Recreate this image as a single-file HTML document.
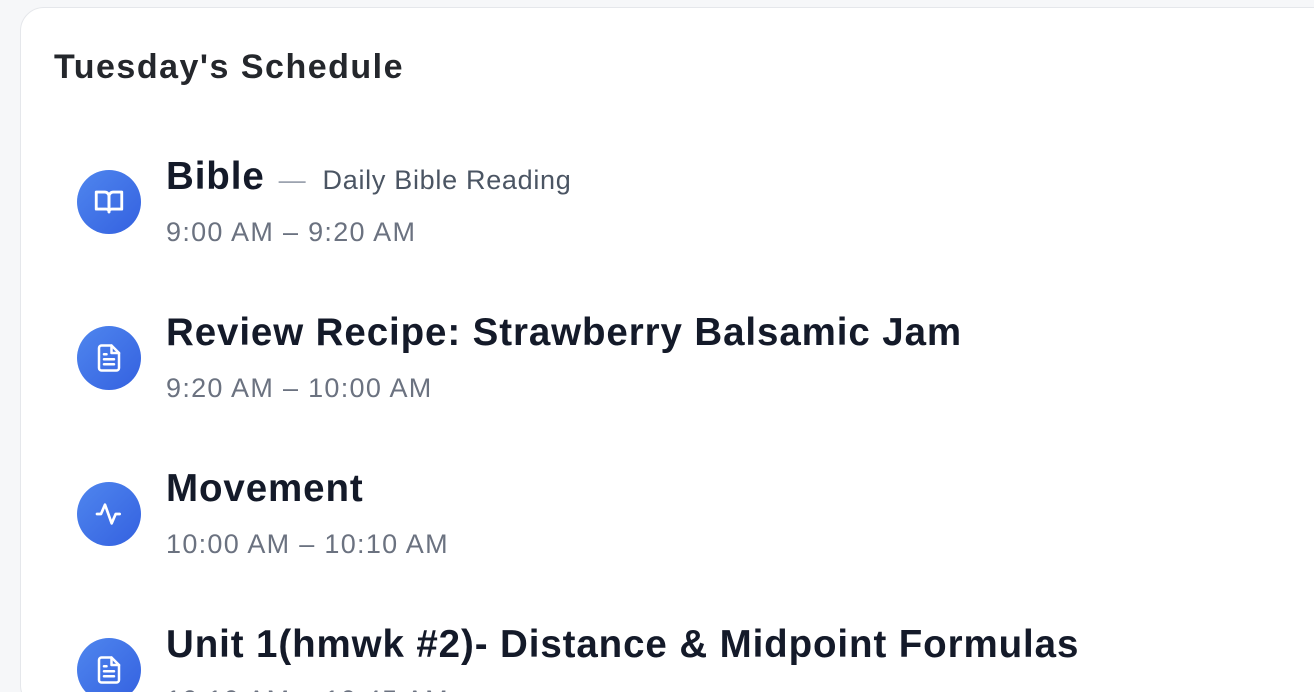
<!DOCTYPE html>
<html><head><style>
html,body{margin:0;width:1314px;height:692px;overflow:hidden}
body{background:#f6f7f9;font-family:"Liberation Sans",sans-serif;position:relative}
.card{position:absolute;left:20px;top:7px;width:1330px;height:700px;background:#fff;border:1.5px solid #e5e7eb;border-radius:24px;}
h1{position:absolute;left:54px;top:48px;margin:0;font-size:34px;font-weight:700;color:#24272c;letter-spacing:1.5px}
.item{position:absolute;left:77px;}
.ic{position:absolute;left:0;width:64px;height:64px;border-radius:50%;background:linear-gradient(135deg,#4f86ee,#3461e0);display:flex;align-items:center;justify-content:center}
.t{position:absolute;left:89px;white-space:nowrap;font-size:38.5px;font-weight:700;color:#141a29;letter-spacing:0.9px}
.t span{font-size:27px;font-weight:400;color:#4b5563;margin-left:16px;letter-spacing:0.7px}
.t i{font-style:normal;color:#9ca3af;font-weight:400;font-size:27px;margin-left:14px}
.s{position:absolute;left:89px;font-size:27px;color:#6b7280;white-space:nowrap;letter-spacing:1.3px}
</style></head><body>
<div class="card"></div>
<h1>Tuesday's Schedule</h1>

<div class="item" style="top:170px">
<div class="ic"><svg width="34" height="34" viewBox="0 0 24 24" fill="none" stroke="#fff" stroke-width="2" stroke-linejoin="round"><path d="M3 5h6a3 3 0 0 1 3 3v11a2 2 0 0 0-2-2H3z"/><path d="M21 5h-6a3 3 0 0 0-3 3v11a2 2 0 0 1 2-2h7z"/></svg></div>
<div class="t" style="top:-15px">Bible<i>—</i><span>Daily Bible Reading</span></div>
<div class="s" style="top:47px">9:00 AM – 9:20 AM</div>
</div>

<div class="item" style="top:326px">
<div class="ic"><svg width="30" height="30" viewBox="0 0 24 24" fill="none" stroke="#fff" stroke-width="2" stroke-linecap="round" stroke-linejoin="round"><path d="M14 2H6a2 2 0 0 0-2 2v16a2 2 0 0 0 2 2h12a2 2 0 0 0 2-2V8z"/><path d="M14 2v6h6"/><path d="M8 13h8M8 17h8M8 9h2"/></svg></div>
<div class="t" style="top:-15px">Review Recipe: Strawberry Balsamic Jam</div>
<div class="s" style="top:47px">9:20 AM – 10:00 AM</div>
</div>

<div class="item" style="top:482px">
<div class="ic"><svg width="32" height="32" viewBox="0 0 24 24" fill="none" stroke="#fff" stroke-width="2" stroke-linecap="round" stroke-linejoin="round"><path d="M3 12h3l3-7 5 14 3-7h3"/></svg></div>
<div class="t" style="top:-15px">Movement</div>
<div class="s" style="top:47px">10:00 AM – 10:10 AM</div>
</div>

<div class="item" style="top:638px">
<div class="ic"><svg width="30" height="30" viewBox="0 0 24 24" fill="none" stroke="#fff" stroke-width="2" stroke-linecap="round" stroke-linejoin="round"><path d="M14 2H6a2 2 0 0 0-2 2v16a2 2 0 0 0 2 2h12a2 2 0 0 0 2-2V8z"/><path d="M14 2v6h6"/><path d="M8 13h8M8 17h8M8 9h2"/></svg></div>
<div class="t" style="top:-15px">Unit 1(hmwk #2)- Distance &amp; Midpoint Formulas</div>
<div class="s" style="top:47px">10:10 AM – 10:45 AM</div>
</div>
</body></html>
